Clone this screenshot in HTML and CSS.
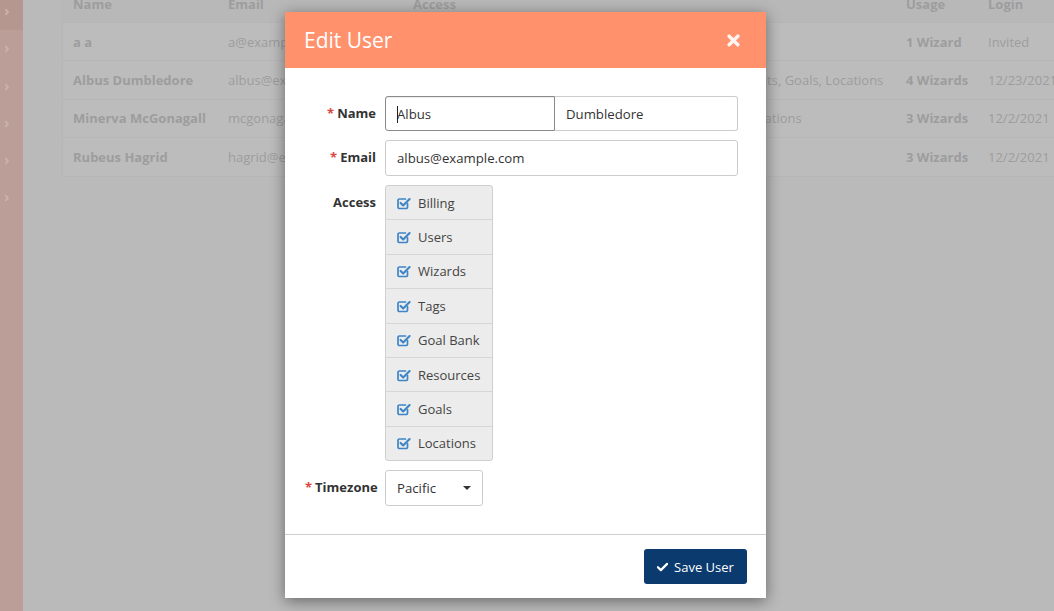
FILE: index.html
```html
<!DOCTYPE html>
<html>
<head>
<meta charset="utf-8">
<title>Edit User</title>
<link rel="stylesheet" href="styles.css">
</head>
<body>
<div class="app">
  <nav class="sidebar">
    <div class="side-item active">›</div>
    <div class="side-item">›</div>
    <div class="side-item">›</div>
    <div class="side-item">›</div>
    <div class="side-item">›</div>
    <div class="side-item">›</div>
  </nav>
  <main class="main">
    <div class="panel">
      <div class="trow thead">
        <div class="c-name">Name</div>
        <div class="c-email">Email</div>
        <div class="c-access">Access</div>
        <div class="c-usage">Usage</div>
        <div class="c-login">Login</div>
      </div>
      <div class="trow">
        <div class="c-name b">a a</div>
        <div class="c-email">a@example.com</div>
        <div class="c-access"></div>
        <div class="c-usage b">1 Wizard</div>
        <div class="c-login">Invited</div>
      </div>
      <div class="trow">
        <div class="c-name b">Albus Dumbledore</div>
        <div class="c-email">albus@example.com</div>
        <div class="c-access">Billing, Users, Wizards, Tags, Goal Bank, Resources, Students, Goals, Locations</div>
        <div class="c-usage b">4 Wizards</div>
        <div class="c-login">12/23/2021</div>
      </div>
      <div class="trow">
        <div class="c-name b">Minerva McGonagall</div>
        <div class="c-email">mcgonagall@example.com</div>
        <div class="c-access">Billing, Users, Wizards, Goal Bank, Resources, Reports, Locations</div>
        <div class="c-usage b">3 Wizards</div>
        <div class="c-login">12/2/2021</div>
      </div>
      <div class="trow">
        <div class="c-name b">Rubeus Hagrid</div>
        <div class="c-email">hagrid@example.com</div>
        <div class="c-access">Goals</div>
        <div class="c-usage b">3 Wizards</div>
        <div class="c-login">12/2/2021</div>
      </div>
    </div>
  </main>
</div>

<div class="modal">
  <div class="modal-header">
    <h4 class="modal-title">Edit User</h4>
    <svg class="close" viewBox="0 0 12 12" aria-label="close"><path d="M2 2l8 8M10 2l-8 8"/></svg>
  </div>
  <div class="modal-body">
    <div class="form-row">
      <label class="lbl"><span class="req">*</span>Name</label>
      <div class="field name-group">
        <div class="input focus"><span class="caret-bar"></span>Albus</div>
        <div class="input last">Dumbledore</div>
      </div>
    </div>
    <div class="form-row">
      <label class="lbl"><span class="req">*</span>Email</label>
      <div class="field">
        <div class="input">albus@example.com</div>
      </div>
    </div>
    <div class="form-row">
      <label class="lbl">Access</label>
      <div class="field">
        <ul class="checklist">
          <li><svg class="cb" viewBox="0 0 14 14"><path d="M10.5 7.5v3.5a1.5 1.5 0 0 1-1.5 1.5H2.5A1.5 1.5 0 0 1 1 11V4.5A1.5 1.5 0 0 1 2.5 3H8.5"/><path class="tick" d="M3.6 6.9l2.6 2.6L12.6 3.1"/></svg>Billing</li>
          <li><svg class="cb" viewBox="0 0 14 14"><path d="M10.5 7.5v3.5a1.5 1.5 0 0 1-1.5 1.5H2.5A1.5 1.5 0 0 1 1 11V4.5A1.5 1.5 0 0 1 2.5 3H8.5"/><path class="tick" d="M3.6 6.9l2.6 2.6L12.6 3.1"/></svg>Users</li>
          <li><svg class="cb" viewBox="0 0 14 14"><path d="M10.5 7.5v3.5a1.5 1.5 0 0 1-1.5 1.5H2.5A1.5 1.5 0 0 1 1 11V4.5A1.5 1.5 0 0 1 2.5 3H8.5"/><path class="tick" d="M3.6 6.9l2.6 2.6L12.6 3.1"/></svg>Wizards</li>
          <li><svg class="cb" viewBox="0 0 14 14"><path d="M10.5 7.5v3.5a1.5 1.5 0 0 1-1.5 1.5H2.5A1.5 1.5 0 0 1 1 11V4.5A1.5 1.5 0 0 1 2.5 3H8.5"/><path class="tick" d="M3.6 6.9l2.6 2.6L12.6 3.1"/></svg>Tags</li>
          <li><svg class="cb" viewBox="0 0 14 14"><path d="M10.5 7.5v3.5a1.5 1.5 0 0 1-1.5 1.5H2.5A1.5 1.5 0 0 1 1 11V4.5A1.5 1.5 0 0 1 2.5 3H8.5"/><path class="tick" d="M3.6 6.9l2.6 2.6L12.6 3.1"/></svg>Goal Bank</li>
          <li><svg class="cb" viewBox="0 0 14 14"><path d="M10.5 7.5v3.5a1.5 1.5 0 0 1-1.5 1.5H2.5A1.5 1.5 0 0 1 1 11V4.5A1.5 1.5 0 0 1 2.5 3H8.5"/><path class="tick" d="M3.6 6.9l2.6 2.6L12.6 3.1"/></svg>Resources</li>
          <li><svg class="cb" viewBox="0 0 14 14"><path d="M10.5 7.5v3.5a1.5 1.5 0 0 1-1.5 1.5H2.5A1.5 1.5 0 0 1 1 11V4.5A1.5 1.5 0 0 1 2.5 3H8.5"/><path class="tick" d="M3.6 6.9l2.6 2.6L12.6 3.1"/></svg>Goals</li>
          <li><svg class="cb" viewBox="0 0 14 14"><path d="M10.5 7.5v3.5a1.5 1.5 0 0 1-1.5 1.5H2.5A1.5 1.5 0 0 1 1 11V4.5A1.5 1.5 0 0 1 2.5 3H8.5"/><path class="tick" d="M3.6 6.9l2.6 2.6L12.6 3.1"/></svg>Locations</li>
        </ul>
      </div>
    </div>
    <div class="form-row">
      <label class="lbl"><span class="req">*</span>Timezone</label>
      <div class="field">
        <div class="select">Pacific<span class="dd"></span></div>
      </div>
    </div>
  </div>
  <div class="modal-footer">
    <button class="btn-save"><svg class="chk" viewBox="0 0 12 10"><path d="M1 5.2l3.2 3.2L11 1.6"/></svg>Save User</button>
  </div>
</div>
</body>
</html>
```

FILE: styles.css
```css
* { box-sizing: border-box; }
html, body { margin: 0; padding: 0; }
body {
  width: 1054px;
  height: 611px;
  overflow: hidden;
  background: #bababa;
  font-family: "Open Sans", "Noto Sans", sans-serif;
  font-size: 13px;
  color: #333;
}

/* dimmed background app */
.app { display: flex; height: 611px; }
.sidebar {
  width: 23px;
  flex: none;
  background: #bb9e97;
  display: flex;
  flex-direction: column;
  margin-top: -7px;
}
.side-item {
  height: 37.3px;
  color: #c9b3ad;
  font-size: 15px;
  font-weight: 700;
  padding-left: 4px;
  line-height: 34px;
}
.side-item.active { background: #b5978f; }
.main { flex: 1; padding-left: 39px; overflow: hidden; }
.panel {
  margin-top: -15px;
  width: 1060px;
  background: #bcbcbc;
  border: 1px solid #b6b6b6;
  border-top: none;
  color: #9d9d9d;
  font-size: 13px;
}
.trow {
  display: flex;
  height: 38.3px;
  align-items: center;
  border-bottom: 1px solid #b6b6b6;
  white-space: nowrap;
}
.trow:last-child { border-bottom: none; }
.thead { background: #b8b8b8; font-weight: 700; height: 38px; }
.b { font-weight: 700; }
.c-name { width: 165px; padding-left: 10px; flex: none; }
.c-email { width: 185px; flex: none; overflow: hidden; }
.c-access { width: 493px; flex: none; overflow: hidden; }
.c-usage { width: 82px; flex: none; }
.c-login { flex: none; }

/* modal */
.modal {
  position: absolute;
  left: 285px;
  top: 12px;
  width: 481px;
  height: 586px;
  background: #fff;
  box-shadow: 0 3px 14px rgba(0, 0, 0, 0.45);
  display: flex;
  flex-direction: column;
}
.modal-header {
  height: 56px;
  flex: none;
  background: #ff916d;
  display: flex;
  align-items: center;
  justify-content: space-between;
  padding: 0 26px 0 19px;
}
.modal-title {
  margin: 0;
  color: #fff;
  font-size: 21px;
  font-weight: 400;
  line-height: 1;
}
.close {
  width: 13px;
  height: 13px;
  fill: none;
  stroke: #fff;
  stroke-opacity: 0.9;
  stroke-width: 3.2;
  stroke-linecap: round;
}
.modal-body {
  flex: 1;
  padding: 28px 28px 0 20px;
  display: flex;
  flex-direction: column;
  gap: 9px;
}
.form-row { display: flex; align-items: flex-start; }
.lbl {
  width: 71px;
  flex: none;
  text-align: right;
  font-weight: 700;
  font-size: 13px;
  color: #333;
  padding-top: 7.5px;
  margin-right: 9px;
  white-space: nowrap;
}
.req { color: #d9463f; margin-right: 3px; }
.field { flex: 1; }
.name-group { display: flex; }
.input {
  height: 36px;
  border: 1px solid #cccccc;
  border-radius: 3px;
  padding: 0 11px;
  display: flex;
  align-items: center;
  font-size: 13.2px;
  color: #333;
  background: #fff;
  position: relative;
}
.name-group .input { height: 35px; }
.name-group .input.focus {
  width: 170px;
  border-color: #8a8a8a;
  border-radius: 3px 0 0 3px;
  box-shadow: inset 0 1px 1px rgba(0,0,0,0.08);
}
.name-group .input.last {
  flex: 1;
  border-left: none;
  border-radius: 0 3px 3px 0;
}
.caret-bar {
  position: absolute;
  left: 11px;
  top: 9px;
  width: 1px;
  height: 17px;
  background: #222;
}
.checklist {
  list-style: none;
  margin: 0;
  padding: 0;
  width: 108px;
  background: #ececec;
  border: 1px solid #cfcfcf;
  border-radius: 3px;
}
.checklist li {
  height: 34.4px;
  display: flex;
  align-items: center;
  padding-left: 11px;
  border-top: 1px solid #d6d6d6;
  color: #444;
  font-size: 13px;
}
.checklist li:first-child { border-top: none; height: 33.4px; }
.cb {
  width: 14px;
  height: 14px;
  margin-right: 7px;
  fill: none;
  stroke: #3d85c6;
  stroke-width: 1.7;
  stroke-linecap: round;
  stroke-linejoin: round;
}
.cb .tick { stroke-width: 2.1; }
.select {
  width: 98px;
  height: 36px;
  border: 1px solid #cccccc;
  border-radius: 3px;
  padding: 0 11px;
  display: flex;
  align-items: center;
  justify-content: space-between;
  font-size: 13.2px;
  color: #333;
  background: #fff;
}
.dd {
  width: 0;
  height: 0;
  border-left: 4px solid transparent;
  border-right: 4px solid transparent;
  border-top: 4px solid #333;
}
.modal-footer {
  flex: none;
  border-top: 1px solid #cfcfcf;
  padding: 14px 19px 14px 0;
  display: flex;
  justify-content: flex-end;
}
.btn-save {
  height: 35px;
  width: 103px;
  background: #0b3a6e;
  border: none;
  border-radius: 3px;
  color: #fff;
  font-family: "Open Sans", "Noto Sans", sans-serif;
  font-size: 13px;
  display: flex;
  align-items: center;
  justify-content: center;
  gap: 6px;
  padding: 0;
}
.chk {
  width: 11px;
  height: 10px;
  fill: none;
  stroke: #fff;
  stroke-width: 2.4;
  stroke-linecap: round;
  stroke-linejoin: round;
}
```
